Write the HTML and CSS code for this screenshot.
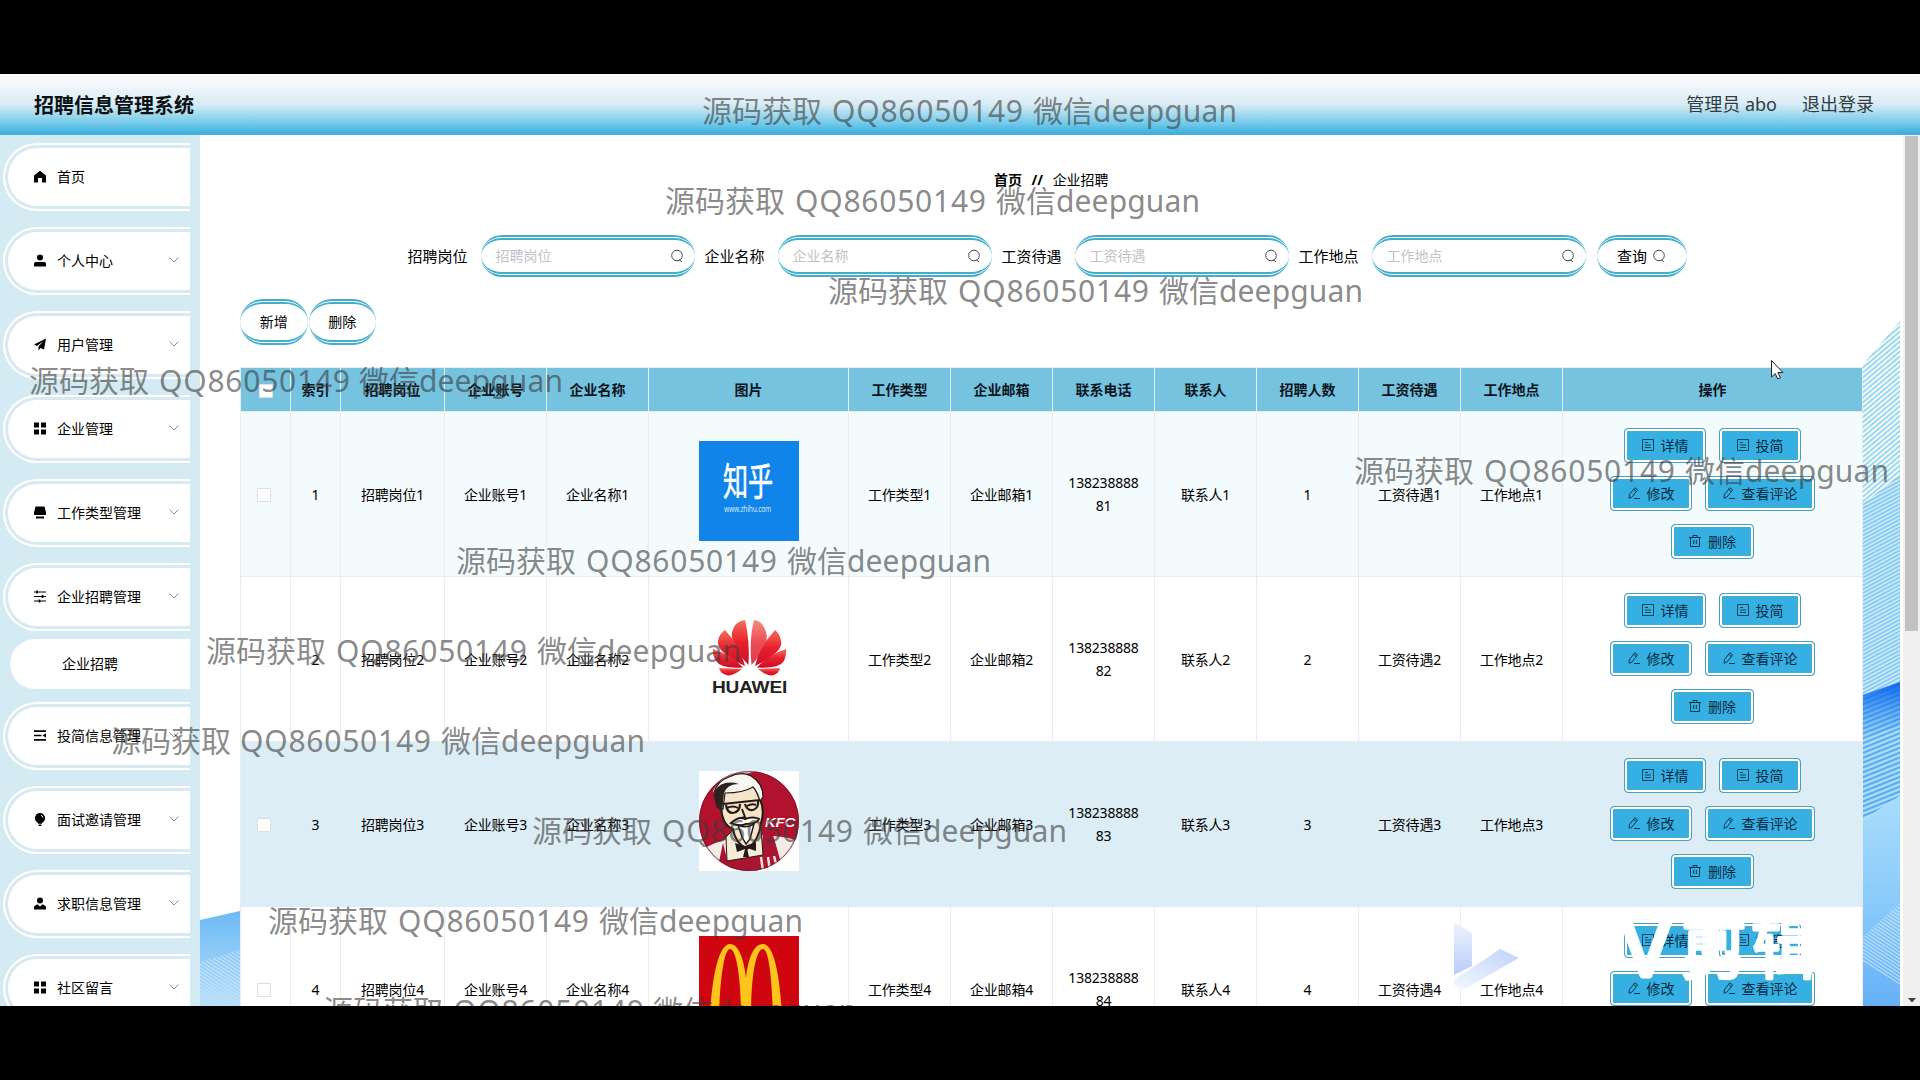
FILE: index.html
```html
<!DOCTYPE html>
<html lang="zh-CN">
<head>
<meta charset="utf-8">
<title>招聘信息管理系统</title>
<link rel="stylesheet" href="styles.css">
</head>
<body>
<svg class="defs" width="0" height="0">
  <symbol id="chev" viewBox="0 0 12 12"><path d="M1.500 3.500 6 8l4.500-4.500" fill="none" stroke="#8c9094" stroke-width="1"/></symbol>
  <symbol id="search" viewBox="0 0 14 14"><circle cx="7" cy="6.500" r="5.300" fill="none" stroke="currentColor"/><path d="M9.500 10.800 12 13" stroke="currentColor"/></symbol>
  <symbol id="grid" viewBox="0 0 12 12"><path d="M0 0h5v5H0zM7 0h5v5H7zM0 7h5v5H0zM7 7h5v5H7z"/></symbol>
  <symbol id="doc" viewBox="0 0 12 12"><path d="M.5.5h11v11H.5zM3 3.500h3M3 6h6M3 8.500h6" fill="none" stroke="currentColor" stroke-width=".8"/></symbol>
  <symbol id="pen" viewBox="0 0 12 12"><path d="M1.300 7.800 6.800.8 9.600 2.900 4 10 1 11.300zM5.600 2.400 8.400 4.500M6 11.500h6" fill="none" stroke="currentColor" stroke-width=".9"/></symbol>
  <symbol id="bin" viewBox="0 0 12 12"><path d="M0 2.500h12M1.500 2.500v9h9v-9M4 2.500v-2h4v2M4.700 5v4M7.300 5v4" fill="none" stroke="currentColor" stroke-width=".9"/></symbol>
</svg>

<div class="window">
  <header class="topbar">
    <h1>招聘信息管理系统</h1>
    <div class="user"><span>管理员 abo</span><span>退出登录</span></div>
  </header>

  <div class="body">
    <nav class="sidebar">
      <div class="item"><div class="pill"><svg viewBox="0 0 12 12"><path d="M6 .3 12 5v7H8V7.500H4V12H0V5z"/></svg><span>首页</span></div></div>
      <div class="item"><div class="pill"><svg viewBox="0 0 12 12"><circle cx="6" cy="3" r="3"/><path d="M0 12V9.500Q0 7.500 2 7.500h8q2 0 2 2V12z"/></svg><span>个人中心</span><svg class="chev"><use href="#chev"/></svg></div></div>
      <div class="item"><div class="pill"><svg viewBox="0 0 12 12"><path d="M12 0 0 6l3 1.500L9.500 2.500 4.500 8v4l2-2.500L10 11z"/></svg><span>用户管理</span><svg class="chev"><use href="#chev"/></svg></div></div>
      <div class="item"><div class="pill"><svg><use href="#grid"/></svg><span>企业管理</span><svg class="chev"><use href="#chev"/></svg></div></div>
      <div class="item"><div class="pill"><svg viewBox="0 0 12 12"><path d="M1.500 0h9L12 6v2.500H0V6zM2 10h8v2H2z"/></svg><span>工作类型管理</span><svg class="chev"><use href="#chev"/></svg></div></div>
      <div class="item"><div class="pill"><svg viewBox="0 0 12 12"><path d="M0 1.500h12M0 6h12M0 10.500h12" stroke="#000" stroke-width="1.200"/><path d="M3 0v3M8.500 4.500v3M5.500 9v3" stroke="#000" stroke-width="1.600"/></svg><span>企业招聘管理</span><svg class="chev"><use href="#chev"/></svg></div></div>
      <div class="sub">企业招聘</div>
      <div class="item"><div class="pill"><svg viewBox="0 0 12 12"><path d="M0 1.700h12M0 6h7.500M0 10.300h12" stroke="#000" stroke-width="1.700"/><path d="M8.500 6 12 3.800v4.400z"/></svg><span>投简信息管理</span><svg class="chev"><use href="#chev"/></svg></div></div>
      <div class="item"><div class="pill"><svg viewBox="0 0 12 14"><circle cx="6" cy="5.500" r="5.500"/><path d="M3 9h6l-1 2.500H4zM4.500 12.500h3V14h-3z"/><path d="M7 2.500q2 .5 2 2.500" fill="none" stroke="#fff"/></svg><span>面试邀请管理</span><svg class="chev"><use href="#chev"/></svg></div></div>
      <div class="item"><div class="pill"><svg viewBox="0 0 12 12"><circle cx="6" cy="3" r="3"/><path d="M0 12V10q0-2 3.500-3.200L6 9l2.500-2.200Q12 8 12 10v2z"/></svg><span>求职信息管理</span><svg class="chev"><use href="#chev"/></svg></div></div>
      <div class="item"><div class="pill"><svg><use href="#grid"/></svg><span>社区留言</span><svg class="chev"><use href="#chev"/></svg></div></div>
    </nav>

    <main class="content">
      <svg class="backdrop" viewBox="200 136 1700 870">
        <defs>
          <pattern id="h1" width="6" height="3.800" patternUnits="userSpaceOnUse" patternTransform="rotate(-40)"><rect width="6" height="3.800" fill="#f4fcff"/><rect width="6" height="1.700" fill="#92d3ea"/></pattern>
          <pattern id="h2" width="6" height="3.400" patternUnits="userSpaceOnUse" patternTransform="rotate(-28)"><rect width="6" height="3.400" fill="#c4eafe"/><rect width="6" height="1.500" fill="#84c4ee"/></pattern>
          <pattern id="h3" width="6" height="4.500" patternUnits="userSpaceOnUse" patternTransform="rotate(-22)"><rect width="6" height="4.500" fill="#a9dcfc"/><rect width="6" height="2" fill="#55a9ee"/></pattern>
          <pattern id="h4" width="4" height="3" patternUnits="userSpaceOnUse" patternTransform="rotate(33)"><rect width="4" height="1" fill="#c3e3fc"/></pattern>
          <linearGradient id="g1" x1="0" y1="0" x2="0" y2="1"><stop offset="0" stop-color="#a9dcfb"/><stop offset=".5" stop-color="#8acbfb"/><stop offset="1" stop-color="#66b0f6"/></linearGradient>
          <linearGradient id="g2" x1="0" y1="0" x2="0" y2="1"><stop offset="0" stop-color="#0e66ec"/><stop offset="1" stop-color="#2a8cf2" stop-opacity="0"/></linearGradient>
          <linearGradient id="g3" x1="0" y1="0" x2="0" y2="1"><stop offset="0" stop-color="#6db9f4"/><stop offset="1" stop-color="#b5dffa"/></linearGradient>
        </defs>
        <path d="M1900 321 1860 368V510l40-32z" fill="url(#h1)"/>
        <path d="M1900 475 1860 506V700l40-16z" fill="url(#h2)"/>
        <path d="M1900 682 1860 696V822l40-26z" fill="url(#h3)"/>
        <path d="M1900 682 1860 696V740l40-14z" fill="url(#g2)"/>
        <path d="M1900 796 1860 822V1006h40z" fill="url(#g1)"/>
        <path d="M1900 903 1863 937V963l37 22z" fill="url(#h4)"/>
        <path d="M200 920 240 911V1006H200z" fill="url(#g3)"/>
        <path d="M200 962 240 950V1006H200z" fill="url(#h4)"/>
      </svg>

      <div class="crumb"><b>首页</b><b>//</b><span>企业招聘</span></div>

      <div class="filters">
        <label>招聘岗位</label><div class="input"><span>招聘岗位</span><svg><use href="#search"/></svg></div>
        <label>企业名称</label><div class="input"><span>企业名称</span><svg><use href="#search"/></svg></div>
        <label>工资待遇</label><div class="input"><span>工资待遇</span><svg><use href="#search"/></svg></div>
        <label>工作地点</label><div class="input"><span>工作地点</span><svg><use href="#search"/></svg></div>
        <div class="query">查询 <svg><use href="#search"/></svg></div>
      </div>

      <div class="tools"><div class="tool">新增</div><div class="tool">删除</div></div>

      <table>
        <colgroup><col class="w50"><col class="w50"><col class="w104"><col class="w102"><col class="w102"><col class="w200"><col class="w102"><col class="w102"><col class="w102"><col class="w102"><col class="w102"><col class="w102"><col class="w102"><col class="w300"></colgroup>
        <thead><tr><th><i class="check"></i></th><th>索引</th><th>招聘岗位</th><th>企业账号</th><th>企业名称</th><th>图片</th><th>工作类型</th><th>企业邮箱</th><th>联系电话</th><th>联系人</th><th>招聘人数</th><th>工资待遇</th><th>工作地点</th><th>操作</th></tr></thead>
        <tbody>
          <tr class="tint">
            <td><i class="check"></i></td><td>1</td><td>招聘岗位1</td><td>企业账号1</td><td>企业名称1</td>
            <td><svg class="pic" viewBox="0 0 100 100"><rect width="100" height="100" fill="#1084e8"/><text x="24" y="54" font-size="38" fill="#fff" textLength="50" lengthAdjust="spacingAndGlyphs" stroke="#fff" stroke-width=".6">知乎</text><text x="25" y="71" font-size="8" fill="#cfe6fb" textLength="47" lengthAdjust="spacingAndGlyphs">www.zhihu.com</text></svg></td>
            <td>工作类型1</td><td>企业邮箱1</td><td>138238888<br>81</td><td>联系人1</td><td>1</td><td>工资待遇1</td><td>工作地点1</td>
            <td><div class="ops"><a><svg><use href="#doc"/></svg>详情</a><a><svg><use href="#doc"/></svg>投简</a><a><svg><use href="#pen"/></svg>修改</a><a class="wide"><svg><use href="#pen"/></svg>查看评论</a><a><svg><use href="#bin"/></svg>删除</a></div></td>
          </tr>
          <tr>
            <td><i class="check faint"></i></td><td>2</td><td>招聘岗位2</td><td>企业账号2</td><td>企业名称2</td>
            <td><svg class="pic" viewBox="0 0 100 100">
              <defs><linearGradient id="hw" x1="0" y1="0" x2="0" y2="1"><stop offset="0" stop-color="#f2705c"/><stop offset=".5" stop-color="#e8202c"/><stop offset="1" stop-color="#c8102a"/></linearGradient></defs>
              <g fill="url(#hw)"><path d="M49.500 59Q31 40 33 26 36 15 46 14 51 34 49.500 59z"/><path d="M52.500 59Q71 40 67 26 64 15 55 14 50 34 52.500 59z" opacity=".8"/><path d="M46 60Q17 46 19 35 20 28 26 24 41 40 46 60z"/><path d="M56 60Q85 46 82 35 81 28 76 24 61 40 56 60z"/><path d="M44 61.500Q22 63 17 55 13 48 14 43 33 49 44 61.500z"/><path d="M58 61.500Q80 63 85 55 88 48 87 43 69 49 58 61.500z"/><path d="M43 63Q33 71 27 69 21 67 20 62z"/><path d="M59 63Q69 71 75 69 80 67 81 62z"/></g>
              <text class="brand" x="13" y="87" font-size="16" font-weight="700" fill="#222" textLength="75" lengthAdjust="spacingAndGlyphs">HUAWEI</text></svg></td>
            <td>工作类型2</td><td>企业邮箱2</td><td>138238888<br>82</td><td>联系人2</td><td>2</td><td>工资待遇2</td><td>工作地点2</td>
            <td><div class="ops"><a><svg><use href="#doc"/></svg>详情</a><a><svg><use href="#doc"/></svg>投简</a><a><svg><use href="#pen"/></svg>修改</a><a class="wide"><svg><use href="#pen"/></svg>查看评论</a><a><svg><use href="#bin"/></svg>删除</a></div></td>
          </tr>
          <tr class="hover">
            <td><i class="check"></i></td><td>3</td><td>招聘岗位3</td><td>企业账号3</td><td>企业名称3</td>
            <td><svg class="pic" viewBox="0 0 100 100">
              <defs><clipPath id="disc"><circle cx="50" cy="50" r="50"/></clipPath></defs>
              <rect width="100" height="100" fill="#fff"/>
              <g clip-path="url(#disc)">
                <rect width="100" height="100" fill="#b3122e"/>
                <path d="M14 20Q24 2 42 0L60 0Q30 4 16 26z" fill="#e9d5d8"/>
                <path d="M0 80Q14 72 28 68L66 64Q90 66 100 70V100H0z" fill="#f1ece6"/>
                <path d="M18 100 24 72 28 88 62 84 64 62 74 64Q80 84 84 100z" fill="#a91430"/>
                <path d="M27 66 38 55 62 58 64 84 28 90z" fill="#f7ecd8" stroke="#241a17"/>
                <path d="M22 32Q22 54 34 58 36 72 48 78 60 70 62 52 66 40 61 28L54 12 26 18z" fill="#f6e4c8" stroke="#241a17" stroke-width="2"/>
                <path d="M15 22Q18 10 30 6 42 0 52 5 64 12 64 26L61 30Q58 20 54 16 44 22 26 22L24 38 18 36z" fill="#fbf8f2" stroke="#241a17" stroke-width="1.200"/>
                <path d="M15 20Q24 8 40 13 28 13 25 22L23 42 17 34z" fill="#2c2320"/>
                <path d="M24 33 61 29M27 34Q28 42 34 42 41 41 41 33M46 33Q48 40 54 39 60 37 59 30" fill="none" stroke="#241a17" stroke-width="2.200"/>
                <path d="M28 37Q34 34 39 37M48 35Q53 32 57 34M43 38 46 46 39 48" fill="none" stroke="#241a17" stroke-width="2"/>
                <path d="M32 52Q40 45 46 48 54 45 60 48 58 53 47 53 40 56 32 52z" fill="#fff" stroke="#241a17" stroke-width="2"/>
                <path d="M39 54Q47 58 55 53L51 68 47 73 43 66z" fill="#fff" stroke="#241a17" stroke-width="1.500"/>
                <path d="M36 72 46 75 57 71V80L48 77 50 86H44L46 78 38 81z" fill="#241a17"/>
                <path d="M62 86 64 100M69 86 71 100M75 85 79 100" stroke="#f3dfe0" stroke-width="2.500"/>
                <text class="brand" x="66" y="56" font-size="13" font-weight="700" font-style="italic" fill="#fff" textLength="30" lengthAdjust="spacingAndGlyphs">KFC</text>
              </g><circle cx="50" cy="50" r="49.500" fill="none" stroke="#5e2430" stroke-width=".8"/></svg></td>
            <td>工作类型3</td><td>企业邮箱3</td><td>138238888<br>83</td><td>联系人3</td><td>3</td><td>工资待遇3</td><td>工作地点3</td>
            <td><div class="ops"><a><svg><use href="#doc"/></svg>详情</a><a><svg><use href="#doc"/></svg>投简</a><a><svg><use href="#pen"/></svg>修改</a><a class="wide"><svg><use href="#pen"/></svg>查看评论</a><a><svg><use href="#bin"/></svg>删除</a></div></td>
          </tr>
          <tr>
            <td><i class="check"></i></td><td>4</td><td>招聘岗位4</td><td>企业账号4</td><td>企业名称4</td>
            <td><svg class="pic" viewBox="0 0 100 100"><rect width="100" height="100" fill="#cf0510"/><path d="M11 80C13 40 20 8 31 8 40 8 45 24 47 42 49 24 54 8 64 8 75 8 81 40 83 80H74C73 44 70 13 64 13 57 13 52 40 52 80H42C42 40 37 13 31 13 25 13 21 44 20 80z" fill="#fdc41c"/></svg></td>
            <td>工作类型4</td><td>企业邮箱4</td><td>138238888<br>84</td><td>联系人4</td><td>4</td><td>工资待遇4</td><td>工作地点4</td>
            <td><div class="ops"><a><svg><use href="#doc"/></svg>详情</a><a><svg><use href="#doc"/></svg>投简</a><a><svg><use href="#pen"/></svg>修改</a><a class="wide"><svg><use href="#pen"/></svg>查看评论</a><a><svg><use href="#bin"/></svg>删除</a></div></td>
          </tr>
        </tbody>
      </table>
    </main>

    <div class="scroll"><div class="thumb"></div><svg viewBox="0 0 8 5"><path d="M0 0h8L4 4.500z" fill="#404040"/></svg></div>
  </div>

  <svg class="overlay" viewBox="0 74 1920 932">
    <defs><linearGradient id="l1" x1="0" y1="0" x2="0" y2="1"><stop offset="0" stop-color="#eef3ff"/><stop offset="1" stop-color="#b9ccf9"/></linearGradient><linearGradient id="l2" x1="0" y1="1" x2="1" y2="0"><stop offset="0" stop-color="#f3f7ff"/><stop offset="1" stop-color="#bfd2fa"/></linearGradient></defs>
    <path d="M1454 922 1472 933V966L1454 975z" fill="url(#l1)"/>
    <path d="M1454 980 1500 949 1519 958 1466 988Q1458 991 1454 984z" fill="url(#l2)"/>
    <g fill="#fff" stroke="#fff" stroke-width="3.500" stroke-linejoin="round" font-size="66"><text x="1622" y="976" font-size="76" stroke-width="5" textLength="48" lengthAdjust="spacingAndGlyphs">V</text><text x="1681" y="973" textLength="136">剪辑</text></g>
    <g class="marks">
      <text x="702" y="122">源码获取</text><text x="832" y="122" textLength="191">QQ86050149</text><text x="1033" y="122">微信</text><text x="1093" y="122" textLength="144">deepguan</text>
      <text x="665" y="212">源码获取</text><text x="795" y="212" textLength="191">QQ86050149</text><text x="996" y="212">微信</text><text x="1056" y="212" textLength="144">deepguan</text>
      <text x="828" y="302">源码获取</text><text x="958" y="302" textLength="191">QQ86050149</text><text x="1159" y="302">微信</text><text x="1219" y="302" textLength="144">deepguan</text>
      <text x="29" y="392">源码获取</text><text x="159" y="392" textLength="191">QQ86050149</text><text x="359" y="392">微信</text><text x="419" y="392" textLength="144">deepguan</text>
      <text x="1354" y="482">源码获取</text><text x="1484" y="482" textLength="191">QQ86050149</text><text x="1685" y="482">微信</text><text x="1745" y="482" textLength="144">deepguan</text>
      <text x="456" y="572">源码获取</text><text x="586" y="572" textLength="191">QQ86050149</text><text x="787" y="572">微信</text><text x="847" y="572" textLength="144">deepguan</text>
      <text x="206" y="662">源码获取</text><text x="336" y="662" textLength="191">QQ86050149</text><text x="537" y="662">微信</text><text x="597" y="662" textLength="144">deepguan</text>
      <text x="111" y="752">源码获取</text><text x="240" y="752" textLength="191">QQ86050149</text><text x="441" y="752">微信</text><text x="501" y="752" textLength="144">deepguan</text>
      <text x="532" y="842">源码获取</text><text x="662" y="842" textLength="191">QQ86050149</text><text x="863" y="842">微信</text><text x="923" y="842" textLength="144">deepguan</text>
      <text x="268" y="932">源码获取</text><text x="398" y="932" textLength="191">QQ86050149</text><text x="599" y="932">微信</text><text x="659" y="932" textLength="144">deepguan</text>
      <text x="323" y="1022">源码获取</text><text x="453" y="1022" textLength="191">QQ86050149</text><text x="653" y="1022">微信</text><text x="713" y="1022" textLength="144">deepguan</text>
    </g>
    <path d="M1771.500 360.500V377l3.700-3.400 2.600 5.400 2.600-1.200-2.500-5.300h5z" fill="#fff" stroke="#222"/>
  </svg>
</div>
</body>
</html>
```
FILE: styles.css
```css
* { box-sizing: border-box; }
body {
  margin: 0;
  height: 1080px;
  padding-top: 74px;
  overflow: hidden;
  background: #000;
  color: #000;
  font: 14px/23px "Noto Sans", "Noto Sans CJK SC", sans-serif;
}
.defs { display: block; height: 0; }
.window {
  position: relative;
  height: 932px;
  overflow: hidden;
  background: #fff;
  display: flex;
  flex-direction: column;
}
.topbar {
  flex: none;
  height: 61px;
  padding: 0 46px 0 34px;
  display: flex;
  align-items: center;
  justify-content: space-between;
  background: linear-gradient(#fafcfe 0, #f1f6fa 20%, #d8ebf4 50%, #6fc8e8 82%, #41b1e0 96%, #4aaed2);
}
h1 { margin: 0; padding-top: 1px; font-size: 20px; font-weight: 700; color: #0b1216; }
.user { display: flex; gap: 25px; font-size: 18px; color: #333c42; }
.body { flex: 1; min-height: 0; display: flex; }

.sidebar {
  flex: none;
  width: 200px;
  padding: 8px 10px 0 3px;
  overflow: hidden;
  background: #d4ebf3;
}
.item {
  height: 68px;
  margin-bottom: 16px;
  padding: 3px 0 3px 3px;
  border: 2px solid #fff;
  border-right: 0;
  border-radius: 34px 0 0 34px;
  background: #d9e9f0;
}
.pill {
  height: 58px;
  padding: 0 10px 2px 26px;
  display: flex;
  align-items: center;
  background: #fff;
  border-radius: 29px 0 0 29px;
}
.pill svg { flex: none; width: 12px; height: 13px; margin-right: 11px; }
.pill .chev { width: 12px; height: 12px; margin: 0 0 0 auto; }
.sub {
  height: 50px;
  margin: -8px 0 13px 7px;
  padding-left: 52px;
  line-height: 50px;
  background: #fff;
  border-radius: 25px 0 0 25px;
}

.content {
  position: relative;
  width: 1700px;
  flex: none;
  padding: 33px 38px 0 40px;
  overflow: hidden;
}
.backdrop { position: absolute; left: 0; top: 1px; width: 1700px; height: 870px; }
.content > :not(.backdrop) { position: relative; }
.crumb { display: flex; gap: 9.500px; padding-left: 754px; height: 24px; }
.filters {
  display: flex;
  align-items: center;
  height: 42px;
  margin-top: 43px;
  padding-left: 167.500px;
  font-size: 15px;
}
.filters label { width: 73px; white-space: nowrap; }
.input, .query, .tool {
  height: 42px;
  display: flex;
  align-items: center;
  background: #fff;
  border: 5px double #42adcd;
  border-width: 5px 0;
  border-radius: 24px;
}
.input {
  width: 214.500px;
  margin-right: 9.500px;
  padding: 0 11px 1px 15px;
  justify-content: space-between;
  font-size: 14px;
  color: #bfc2cb;
}
.input svg, .query svg { width: 14px; height: 14px; color: #45484c; }
.query { width: 90px; margin-left: 1px; justify-content: center; gap: 5px; }
.tools { display: flex; gap: 1px; margin-top: 22px; }
.tool { width: 67.500px; height: 46px; padding-bottom: 2px; justify-content: center; }

table {
  width: 1622px;
  margin-top: 22px;
  border-spacing: 0;
  table-layout: fixed;
  border-left: 1px solid #e6eef2;
  border-top: 1px solid #e6eef2;
  background: #fff;
}
.w50 { width: 50px; } .w102 { width: 102px; } .w104 { width: 104px; } .w200 { width: 200px; } .w300 { width: 300px; }
th, td { padding: 0; text-align: center; border-right: 1px solid #e9edf1; border-bottom: 1px solid #e9edf1; }
th { height: 44px; background: #76c3e0; border-right-color: #e0f2f8; color: #0a151d; }
td { height: 165px; letter-spacing: -.2px; }
.tint td { background: #f4fbfc; }
.hover td { background: #dcedf5; border-color: #dcedf5; }
.check { display: inline-block; width: 14px; height: 14px; border: 1px solid #dcdfe6; border-radius: 1px; background: #fff; vertical-align: middle; }
td .check { margin: 0 4px 2px 0; }
.faint { border-color: #f6f6f8; }
.pic { display: block; width: 100px; height: 100px; margin: -7px auto 0; }
.brand { font-family: "Liberation Sans", sans-serif; }
.ops { display: flex; flex-wrap: wrap; justify-content: center; gap: 13px 12.500px; padding: 0 40px 1px; }
.ops a {
  flex: none;
  width: 82.500px;
  height: 35px;
  padding-bottom: 1px;
  display: flex;
  align-items: center;
  justify-content: center;
  gap: 7px;
  border: 1px solid #4b9fbb;
  border-radius: 4px;
  background: #36b0e3;
  box-shadow: inset 0 0 0 2px #fff, inset 0 0 0 3px #4bacca;
  color: #0a2a40;
  letter-spacing: 0;
}
.ops .wide { width: 110.500px; }
.ops svg { width: 12px; height: 12px; }

.scroll {
  flex: 1;
  margin-left: 3px;
  padding: 1px 2px 3px;
  display: flex;
  flex-direction: column;
  align-items: center;
  justify-content: space-between;
  background: #f0f0f0;
}
.thumb { width: 13px; height: 495px; background: #c1c1c1; }
.scroll svg { width: 8px; height: 5px; }

.overlay { position: absolute; left: 0; top: 0; width: 1920px; height: 932px; }
.marks { font-size: 30px; fill: #3c3c3c; fill-opacity: .62; }
```
